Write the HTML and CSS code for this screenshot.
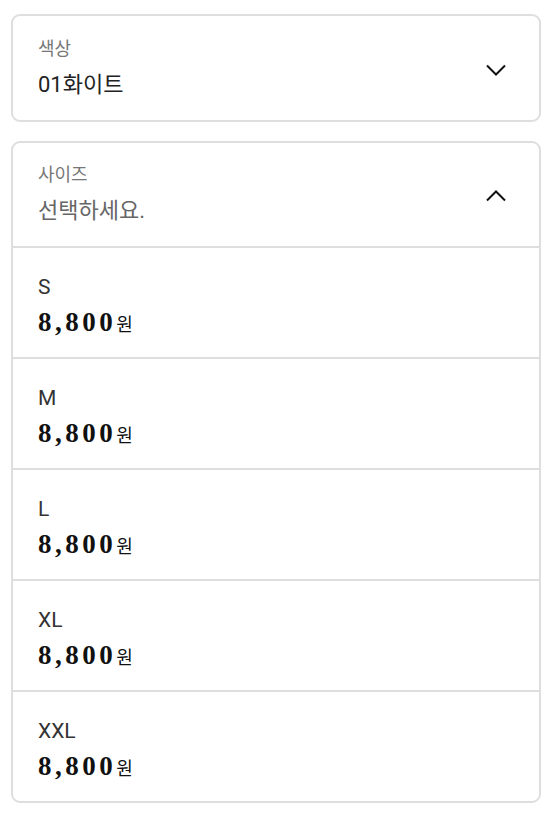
FILE: index.html
```html
<!DOCTYPE html>
<html lang="ko">
<head>
<meta charset="utf-8">
<title>옵션 선택</title>
<link rel="stylesheet" href="styles.css">
</head>
<body>
<div class="options">
  <div class="select">
    <div class="select-head">
      <div class="select-text">
        <div class="select-label">색상</div>
        <div class="select-value">01화이트</div>
      </div>
      <svg class="chevron" width="24" height="24" viewBox="0 0 24 24"><path d="M3 7.5 L12 16.5 L21 7.5" fill="none" stroke="#111" stroke-width="2"/></svg>
    </div>
  </div>

  <div class="select open">
    <div class="select-head">
      <div class="select-text">
        <div class="select-label">사이즈</div>
        <div class="select-value placeholder">선택하세요.</div>
      </div>
      <svg class="chevron" width="24" height="24" viewBox="0 0 24 24"><path d="M3 16.5 L12 7.5 L21 16.5" fill="none" stroke="#111" stroke-width="2"/></svg>
    </div>
    <ul class="option-list">
      <li class="option"><div class="option-name">S</div><div class="option-price">8,800<span class="won">원</span></div></li>
      <li class="option"><div class="option-name">M</div><div class="option-price">8,800<span class="won">원</span></div></li>
      <li class="option"><div class="option-name">L</div><div class="option-price">8,800<span class="won">원</span></div></li>
      <li class="option"><div class="option-name">XL</div><div class="option-price">8,800<span class="won">원</span></div></li>
      <li class="option"><div class="option-name">XXL</div><div class="option-price">8,800<span class="won">원</span></div></li>
    </ul>
  </div>
</div>
</body>
</html>
```

FILE: styles.css
```css
html, body {
  margin: 0;
  padding: 0;
  background: #fff;
}

body {
  font-family: Roboto, "Noto Sans CJK KR", sans-serif;
  color: #222;
}

.options {
  width: 530px;
  padding: 14px 0 0 11px;
  display: flex;
  flex-direction: column;
  gap: 19px;
}

.select {
  border: 2px solid #dedede;
  border-radius: 9px;
  background: #fff;
}

.select-head {
  display: flex;
  align-items: center;
  justify-content: space-between;
  padding: 20px 31px 17px 25px;
}

.select:first-child .select-head {
  padding-top: 21px;
  padding-bottom: 17px;
}

.select-label {
  height: 24px;
  font-size: 18px;
  line-height: 24px;
  color: #777;
}

.select-value {
  height: 36px;
  margin-top: 6px;
  font-size: 22px;
  line-height: 36px;
  color: #222;
}

.select-value.placeholder {
  color: #666;
}

.chevron {
  display: block;
  flex: none;
}

.option-list {
  list-style: none;
  margin: 0;
  padding: 0;
}

.option {
  border-top: 2px solid #dedede;
  padding: 25px 25px 18px;
}

.option-name {
  height: 28px;
  font-size: 21px;
  line-height: 28px;
  color: #333;
}

.option-price {
  height: 34px;
  margin-top: 4px;
  font-family: "Liberation Serif", "Noto Sans CJK KR", serif;
  font-weight: 700;
  font-size: 27px;
  line-height: 34px;
  letter-spacing: 3.5px;
  color: #111;
}

.won {
  font-family: "Noto Sans CJK KR", sans-serif;
  font-weight: 400;
  font-size: 18px;
  line-height: 1;
  letter-spacing: 0;
}
```
